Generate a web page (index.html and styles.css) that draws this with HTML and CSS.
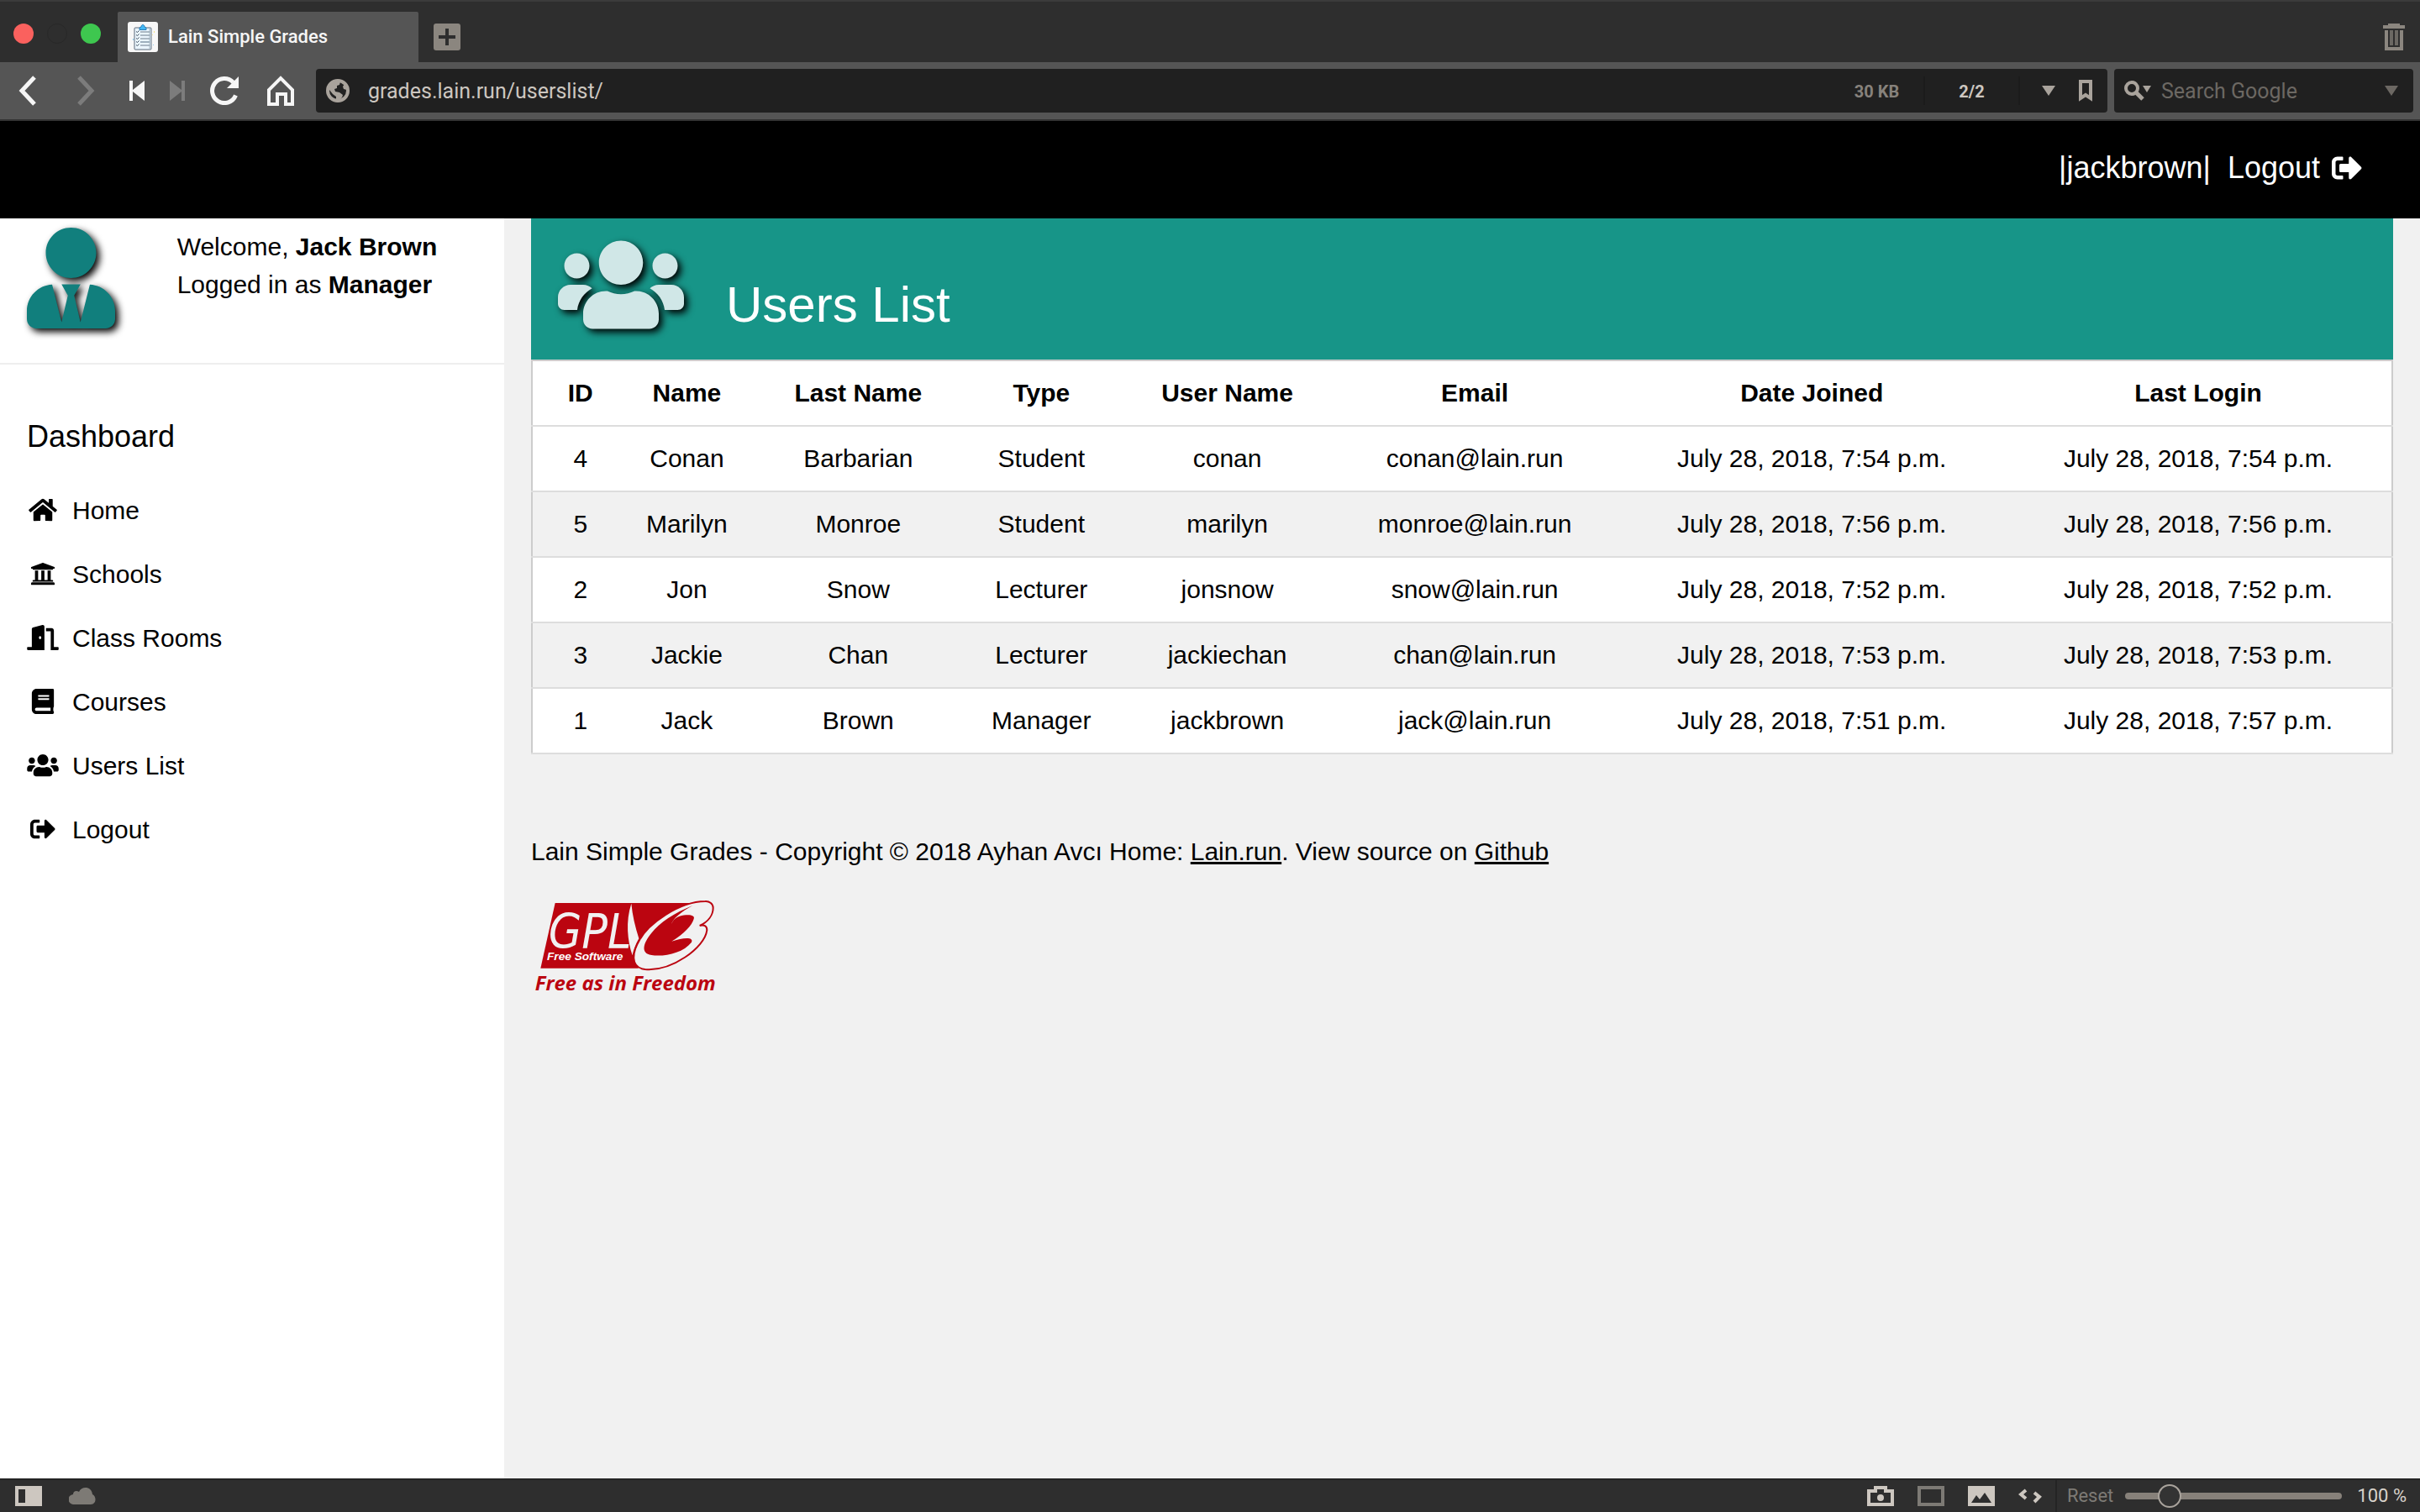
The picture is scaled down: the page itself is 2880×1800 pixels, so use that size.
FILE: index.html
```html
<!DOCTYPE html>
<html lang="en">
<head>
<meta charset="utf-8">
<title>Lain Simple Grades</title>
<link rel="stylesheet" href="styles.css">
</head>
<body>
<svg class="sprite" aria-hidden="true">
  <symbol id="sign-out" viewBox="0 0 512 512"><path d="M497 273L329 441c-15 15-41 4.500-41-17v-96H152c-13.300 0-24-10.700-24-24v-96c0-13.300 10.700-24 24-24h136V88c0-21.400 25.900-32 41-17l168 168c9.300 9.400 9.300 24.600 0 34zM192 436v-40c0-6.600-5.400-12-12-12H96c-17.700 0-32-14.300-32-32V160c0-17.700 14.300-32 32-32h84c6.600 0 12-5.400 12-12V76c0-6.600-5.400-12-12-12H96c-53 0-96 43-96 96v192c0 53 43 96 96 96h84c6.600 0 12-5.400 12-12z"/></symbol>
  <symbol id="users" viewBox="0 0 640 512"><path d="M96 224c35.300 0 64-28.700 64-64s-28.700-64-64-64-64 28.700-64 64 28.700 64 64 64zm448 0c35.300 0 64-28.700 64-64s-28.700-64-64-64-64 28.700-64 64 28.700 64 64 64zm32 32h-64c-17.600 0-33.500 7.100-45.100 18.600 40.300 22.100 68.900 62 75.100 109.400h66c17.700 0 32-14.300 32-32v-32c0-35.300-28.700-64-64-64zm-256 0c61.900 0 112-50.100 112-112S381.900 32 320 32 208 82.100 208 144s50.100 112 112 112zm76.800 32h-8.300c-20.800 10-43.900 16-68.500 16s-47.600-6-68.500-16h-8.300C179.600 288 128 339.600 128 403.200V432c0 26.500 21.500 48 48 48h288c26.500 0 48-21.500 48-48v-28.800c0-63.600-51.600-115.200-115.200-115.200zm-223.700-13.400C161.500 263.100 145.600 256 128 256H64c-35.300 0-64 28.700-64 64v32c0 17.700 14.300 32 32 32h65.900c6.300-47.400 34.900-87.300 75.200-109.400z"/></symbol>
</svg>

<header class="browser">
  <div class="tabs">
    <div class="lights">
      <button class="light red" aria-label="Close"></button>
      <button class="light off" aria-label="Minimize"></button>
      <button class="light green" aria-label="Zoom"></button>
    </div>
    <button class="tab">
      <svg class="favicon" viewBox="0 0 36 36"><rect width="36" height="36" rx="3" fill="#f8f8f8"/><rect x="8" y="7" width="20" height="26" rx="1" fill="#eaf5fd" stroke="#5d6b7a"/><path d="M26.500 8v24" stroke="#b4c4d0" stroke-width="2"/><path d="M15 12h11M15 16h11M15 20h11M15 28h11" stroke="#6d7c8a"/><path d="M15 24h11" stroke="#9eb0bd" stroke-width="2"/><path d="M10 11.500l1.500 1 2-2M10 15.500l1.500 1 2-2M10 19.500l1.500 1 2-2M10 23.500l1.500 1 2-2M10 27.500l1.500 1 2-2" fill="none" stroke="#3d4b5a"/><path d="M14 9.500V7l2-1c0-3.500 4-3.500 4 0l2 1v2.500z" fill="#42b8f5" stroke="#2e80b8"/><path d="M31 11h1v2h-1zM29 15h1v1h-1z" fill="#f4e48c"/><path d="M6 20h1v2H6zM30 27h1v1h-1z" fill="#8ccdf2"/></svg>
      Lain Simple Grades
    </button>
    <button class="new-tab" aria-label="New tab"><svg width="32" height="32" viewBox="0 0 32 32"><rect width="32" height="32" rx="3" fill="#8b867f"/><path d="M16 6v20M6 16h20" stroke="#2e2e2e" stroke-width="4"/></svg></button>
    <button class="trash" aria-label="Closed tabs"><svg width="26" height="32" viewBox="0 0 26 32"><path d="M0 2h6V0h14v2h6v4H0zM2 8h4v20h14V8h4v24H2z" fill="#8b867f"/><path d="M8 8h4v18H8zM14 8h4v18h-4z" fill="#6b6863"/></svg></button>
  </div>

  <div class="toolbar">
    <button class="tool back" aria-label="Back"><svg width="22" height="36" viewBox="0 0 22 36"><path d="M19 2L4 18l15 16" fill="none" stroke="#f6f6f6" stroke-width="5"/></svg></button>
    <button class="tool forward" aria-label="Forward"><svg width="22" height="36" viewBox="0 0 22 36"><path d="M2 2l15 16L2 34" fill="none" stroke="#7c7c7c" stroke-width="5"/></svg></button>
    <button class="tool rewind" aria-label="Rewind"><svg width="18" height="24" viewBox="0 0 18 24"><path d="M0 0h4v11L18 0v24L4 13v11H0z" fill="#f6f6f6"/></svg></button>
    <button class="tool fast" aria-label="Fast forward"><svg width="18" height="24" viewBox="0 0 18 24"><path d="M18 0h-4v11L0 0v24l14-11v11h4z" fill="#7c7c7c"/></svg></button>
    <button class="tool reload" aria-label="Reload"><svg width="34" height="34" viewBox="0 0 34 34"><path d="M30.500 22.500A14.500 14.500 0 1 1 27.500 7" fill="none" stroke="#f6f6f6" stroke-width="5"/><path d="M34 0v14H20z" fill="#f6f6f6"/></svg></button>
    <button class="tool home" aria-label="Home"><svg width="32" height="36" viewBox="0 0 32 36"><path d="M2 34V17L16 3l14 14v17h-8V22H12v12z" fill="none" stroke="#f6f6f6" stroke-width="4"/></svg></button>
    <div class="field address">
      <svg width="28" height="28" viewBox="0 0 28 28"><circle cx="14" cy="14" r="12" fill="#222" stroke="#a9a39c" stroke-width="4"/><path d="M3 10C6 4 11 2 17 3l-1 4-3 1v3l-3 1 1 3 5 1 4 3-1 3-4 4-3-1v-4l-4-3-4-5z" fill="#a9a39c"/><path d="M18 3l4 3-2 3 1 3 4 1V8z" fill="#a9a39c"/></svg>
      <input class="url" type="text" aria-label="Address" value="grades.lain.run/userslist/">
      <span class="stat size">30 KB</span>
      <span class="stat count">2/2</span>
      <button class="drop" aria-label="History"><svg width="16" height="12" viewBox="0 0 16 12"><path d="M0 0h16L8 12z" fill="#a9a39c"/></svg></button>
      <button class="mark" aria-label="Bookmark"><svg width="16" height="26" viewBox="0 0 16 26"><path d="M2 2h12v20l-6-4-6 4z" fill="none" stroke="#a9a39c" stroke-width="4"/></svg></button>
    </div>
    <div class="field search">
      <svg width="32" height="24" viewBox="0 0 32 24"><circle cx="9" cy="9" r="7" fill="none" stroke="#a9a39c" stroke-width="4"/><path d="M14 14l8 8" stroke="#a9a39c" stroke-width="5"/><path d="M22 6h10l-5 8z" fill="#a9a39c"/></svg>
      <input class="query" type="text" aria-label="Search" placeholder="Search Google">
      <button class="engine" aria-label="Search engine"><svg width="16" height="12" viewBox="0 0 16 12"><path d="M0 0h16L8 12z" fill="#6c6863"/></svg></button>
    </div>
  </div>
</header>

<div class="topbar">
  <a href="#">|jackbrown|</a>
  <a class="logout" href="#">Logout <svg width="36" height="36"><use href="#sign-out"/></svg></a>
</div>

<div class="page">
  <nav class="sidebar">
    <div class="profile">
      <svg class="avatar" width="105" height="120" viewBox="0 0 448 512"><path d="M224 256c70.700 0 128-57.300 128-128S294.700 0 224 0 96 57.300 96 128s57.300 128 128 128zm95.800 32.600L272 480l-32-136 32-56h-96l32 56-32 136-47.800-191.400C56.900 292 0 350.300 0 422.400V464c0 26.500 21.500 48 48 48h352c26.500 0 48-21.500 48-48v-41.600c0-72.100-56.900-130.400-128.200-133.800z"/></svg>
      <div>Welcome, <strong>Jack Brown</strong><br>Logged in as <strong>Manager</strong></div>
    </div>
    <h2>Dashboard</h2>
    <ul class="menu">
      <li><a href="#"><svg viewBox="0 0 576 512"><path d="M280.370 148.260L96 300.110V464a16 16 0 0 0 16 16l112.060-.290a16 16 0 0 0 15.920-16V368a16 16 0 0 1 16-16h64a16 16 0 0 1 16 16v95.640a16 16 0 0 0 16 16.050L464 480a16 16 0 0 0 16-16V300L295.670 148.260a12.190 12.190 0 0 0-15.300 0zM571.600 251.470L488 182.560V44.050a12 12 0 0 0-12-12h-56a12 12 0 0 0-12 12v72.610L318.470 43a48 48 0 0 0-61 0L4.340 251.470a12 12 0 0 0-1.600 16.900l25.500 31A12 12 0 0 0 45.150 301l235.220-193.740a12.190 12.190 0 0 1 15.300 0L530.900 301a12 12 0 0 0 16.900-1.600l25.500-31a12 12 0 0 0-1.700-16.930z"/></svg>Home</a></li>
      <li><a href="#"><svg viewBox="0 0 512 512"><path d="M496 128v16a8 8 0 0 1-8 8h-24v12c0 6.627-5.373 12-12 12H60c-6.627 0-12-5.373-12-12v-12H24a8 8 0 0 1-8-8v-16a8 8 0 0 1 4.941-7.392l232-88a7.996 7.996 0 0 1 6.118 0l232 88A8 8 0 0 1 496 128zm-24 304H40c-13.255 0-24 10.745-24 24v16a8 8 0 0 0 8 8h464a8 8 0 0 0 8-8v-16c0-13.255-10.745-24-24-24zM96 192v192H60c-6.627 0-12 5.373-12 12v20h416v-20c0-6.627-5.373-12-12-12h-36V192h-64v192h-64V192h-64v192h-64V192H96z"/></svg>Schools</a></li>
      <li><a href="#"><svg viewBox="0 0 640 512"><path d="M624 448h-80V113.450C544 86.190 522.470 64 496 64H384v64h96v384h144c8.840 0 16-7.160 16-16v-32c0-8.840-7.160-16-16-16zM312.240 1.010l-192 49.740C105.990 54.440 96 67.700 96 82.920V448H16c-8.840 0-16 7.160-16 16v32c0 8.840 7.160 16 16 16h336V33.180c0-21.580-19.560-37.410-39.760-32.170zM264 288c-13.250 0-24-14.330-24-32s10.750-32 24-32 24 14.330 24 32-10.750 32-24 32z"/></svg>Class Rooms</a></li>
      <li><a href="#"><svg viewBox="0 0 448 512"><path d="M448 360V24c0-13.300-10.700-24-24-24H96C43 0 0 43 0 96v320c0 53 43 96 96 96h328c13.300 0 24-10.700 24-24v-16c0-7.500-3.500-14.300-8.900-18.700-4.200-15.400-4.200-59.300 0-74.700 5.400-4.300 8.900-11.100 8.900-18.600zM128 134c0-3.300 2.700-6 6-6h212c3.300 0 6 2.700 6 6v20c0 3.300-2.700 6-6 6H134c-3.300 0-6-2.700-6-6v-20zm0 64c0-3.300 2.700-6 6-6h212c3.300 0 6 2.700 6 6v20c0 3.300-2.700 6-6 6H134c-3.300 0-6-2.700-6-6v-20zm253.400 250H96c-17.700 0-32-14.300-32-32 0-17.600 14.400-32 32-32h285.400c-1.900 17.100-1.900 46.900 0 64z"/></svg>Courses</a></li>
      <li><a href="#"><svg><use href="#users"/></svg>Users List</a></li>
      <li><a href="#"><svg><use href="#sign-out"/></svg>Logout</a></li>
    </ul>
  </nav>

  <main>
    <div class="title">
      <svg class="group" width="150" height="120"><use href="#users"/></svg>
      <h1>Users List</h1>
    </div>
    <table>
      <thead>
        <tr><th>ID</th><th>Name</th><th>Last Name</th><th>Type</th><th>User Name</th><th>Email</th><th>Date Joined</th><th>Last Login</th></tr>
      </thead>
      <tbody>
        <tr><td>4</td><td>Conan</td><td>Barbarian</td><td>Student</td><td>conan</td><td>conan@lain.run</td><td>July 28, 2018, 7:54 p.m.</td><td>July 28, 2018, 7:54 p.m.</td></tr>
        <tr><td>5</td><td>Marilyn</td><td>Monroe</td><td>Student</td><td>marilyn</td><td>monroe@lain.run</td><td>July 28, 2018, 7:56 p.m.</td><td>July 28, 2018, 7:56 p.m.</td></tr>
        <tr><td>2</td><td>Jon</td><td>Snow</td><td>Lecturer</td><td>jonsnow</td><td>snow@lain.run</td><td>July 28, 2018, 7:52 p.m.</td><td>July 28, 2018, 7:52 p.m.</td></tr>
        <tr><td>3</td><td>Jackie</td><td>Chan</td><td>Lecturer</td><td>jackiechan</td><td>chan@lain.run</td><td>July 28, 2018, 7:53 p.m.</td><td>July 28, 2018, 7:53 p.m.</td></tr>
        <tr><td>1</td><td>Jack</td><td>Brown</td><td>Manager</td><td>jackbrown</td><td>jack@lain.run</td><td>July 28, 2018, 7:51 p.m.</td><td>July 28, 2018, 7:57 p.m.</td></tr>
      </tbody>
    </table>
    <footer>
      <p>Lain Simple Grades - Copyright © 2018 Ayhan Avcı Home: <a href="#">Lain.run</a>. View source on <a href="#">Github</a></p>
      <svg class="license" width="234" height="130" viewBox="18 0 702 390" role="img" aria-label="GPL v3">
        <path d="M104 45H625L400 278H52z" fill="#bb0510"/>
        <path d="M376 47C355 110 362 180 380 232C383 215 390 195 403 172C390 130 380 90 376 47z" fill="#f1f1f1"/>
        <path d="M640 39C655 38 668 48 668 62C668 88 650 112 620 126C638 122 646 128 646 142C638 205 520 290 425 282C370 275 380 220 405 178C435 120 545 40 640 39z" fill="#f1f1f1" stroke="#bb0510" stroke-width="6"/>
        <path d="M518 124C524 106 534 97 548 92C580 84 605 88 599 102C592 126 565 154 520 182C560 168 600 165 591 185C560 225 490 238 448 231C408 225 418 188 448 152C476 116 530 80 595 54C555 76 524 100 518 124z" fill="#bb0510"/>
        <text class="gpl" x="80" y="207">GPL</text>
        <text class="free-software" x="75" y="249">Free Software</text>
        <text class="freedom" x="32" y="356">Free as in Freedom</text>
      </svg>
    </footer>
  </main>
</div>

<div class="statusbar">
  <button aria-label="Panel"><svg width="32" height="24" viewBox="0 0 32 24"><path d="M0 0h32v24H0zM4 4v16h8V4z" fill="#cdc7c0" fill-rule="evenodd"/></svg></button>
  <button aria-label="Sync"><svg width="32" height="20" viewBox="0 0 32 20"><path d="M6 20a6 6 0 0 1-1-12C5 4 9 3 12 5c3-7 15-7 16 3 5 2 5 12-2 12z" fill="#7d7a75"/></svg></button>
  <div class="view">
    <button aria-label="Capture"><svg width="32" height="24" viewBox="0 0 32 24"><path d="M8 0h16v4h8v20H0V4h8zM12 4v4H4v12h24V8h-8V4z" fill="#cdc7c0" fill-rule="evenodd"/><circle cx="16" cy="14" r="4" fill="#cdc7c0"/></svg></button>
    <button aria-label="Tiling"><svg width="32" height="24" viewBox="0 0 32 24"><path d="M2 2h28v20H2z" fill="none" stroke="#7d7a75" stroke-width="4"/></svg></button>
    <button aria-label="Images"><svg width="32" height="24" viewBox="0 0 32 24"><path d="M0 0h32v24H0zM4 20h24L20 8l-6 8-4-5z" fill="#cdc7c0" fill-rule="evenodd"/></svg></button>
    <button aria-label="Page actions"><svg width="28" height="18" viewBox="0 0 28 18"><path d="M9 2L3 7l6 5M19 5l6 5-6 6" fill="none" stroke="#cdc7c0" stroke-width="4"/></svg></button>
  </div>
  <div class="zoom">
    <button class="reset">Reset</button>
    <input type="range" min="40" max="400" value="100" aria-label="Page zoom">
    <span>100 %</span>
  </div>
</div>
</body>
</html>
```

FILE: styles.css
```css
* { box-sizing: border-box; }

body {
  margin: 0;
  min-height: 100vh;
  display: flex;
  flex-direction: column;
  background: #f1f1f1;
  color: #000;
  font: 30px/44px "Liberation Sans", Arial, sans-serif;
}

button {
  margin: 0;
  padding: 0;
  border: 0;
  background: none;
  color: inherit;
  font: inherit;
}

input { font: inherit; }
svg { display: block; flex: none; }
a { color: inherit; }
.sprite { position: absolute; width: 0; height: 0; }

/* Browser window */
.browser, .statusbar {
  background: #2e2e2e;
  font: 25px/32px Roboto, Inter, sans-serif;
}

.browser { border-top: 2px solid #3b3b3b; border-bottom: 2px solid #333; }

.tabs {
  display: flex;
  align-items: center;
  height: 72px;
  padding-top: 12px;
}

.lights {
  display: flex;
  gap: 16px;
  width: 140px;
  padding: 0 0 8px 16px;
}

.light { width: 24px; height: 24px; border-radius: 50%; }
.red { background: #fa615e; }
.off { border: 1px solid #282828; }
.green { background: #3ec74f; }

.tab {
  display: flex;
  align-items: center;
  gap: 12px;
  width: 358px;
  height: 60px;
  padding-left: 12px;
  border-radius: 2px 2px 0 0;
  background: #555;
  color: #f6f6f6;
  font-size: 22px;
  font-weight: 500;
}

.favicon { width: 36px; height: 36px; }
.new-tab { margin-left: 18px; }
.trash { margin: 0 18px 0 auto; }

.toolbar {
  display: flex;
  align-items: center;
  height: 68px;
  padding-right: 8px;
  background: #555;
}

.tool { display: flex; justify-content: center; }
.back { width: 66px; }
.forward { width: 74px; }
.rewind { width: 46px; }
.fast { width: 50px; }
.reload { width: 62px; }
.home { width: 72px; margin-right: 6px; }

.field {
  display: flex;
  align-items: center;
  height: 52px;
  padding: 0 12px;
  border-radius: 4px;
  background: #202020;
}

.field input {
  flex: 1;
  min-width: 0;
  padding: 2px 0 0;
  border: 0;
  outline: 0;
  background: none;
}

.address { flex: 1; }
.search { width: 356px; margin-left: 8px; }
.url { margin-left: 22px; color: #cdc7c0; }
.query { margin-left: 12px; }
.query::placeholder { color: #6c6863; opacity: 1; }
.engine { margin-right: 6px; }

.stat {
  width: 113px;
  padding-top: 2px;
  border-right: 2px solid #1b1b1b;
  font-size: 20px;
  font-weight: 700;
  text-align: center;
}

.size { color: #87827c; }
.count { color: #cdc7c0; }
.drop { margin: 0 28px 0 26px; }
.mark { margin-right: 6px; }

/* Site header */
.topbar {
  display: flex;
  align-items: center;
  justify-content: flex-end;
  gap: 20px;
  height: 116px;
  padding: 0 69px 4px 0;
  background: #000;
  color: #fff;
  font-size: 36px;
  line-height: 54px;
}

.topbar a { text-decoration: none; }
.topbar svg, .menu svg { fill: currentColor; }
.logout { display: flex; align-items: center; gap: 14px; }

.page { display: flex; flex: 1; }

/* Sidebar */
.sidebar { flex: none; width: 600px; background: #fff; }

.profile {
  display: grid;
  grid-template-columns: 1fr 2fr;
  padding: 11px 32px 41px;
  border-bottom: 2px solid #eee;
  line-height: 45px;
}

.avatar { fill: #117f7d; filter: drop-shadow(4px 4px 4px #000); }

.sidebar h2 {
  margin: 0;
  padding: 59px 32px 23px;
  font-size: 36px;
  font-weight: 400;
  line-height: 54px;
}

.menu { margin: 0; padding: 0; list-style: none; }

.menu a {
  display: flex;
  align-items: center;
  gap: 16px;
  padding: 16px 32px;
  text-decoration: none;
}

.menu svg { width: 38px; height: 30px; margin-bottom: 2px; }

/* Users list */
main { flex: 1; padding: 0 32px; }

.title {
  display: flex;
  align-items: flex-end;
  gap: 50px;
  padding: 19px 32px 29px;
  background: #179588;
  color: #fff;
}

.group { fill: #d0e7e7; filter: drop-shadow(4px 4px 4px #000); }
.title h1 { margin: 0; font-size: 60px; font-weight: 400; line-height: 72px; }

table {
  width: 100%;
  border: 2px solid #ccc;
  border-collapse: collapse;
  background: #fff;
  text-align: center;
}

tr { border-bottom: 2px solid #ddd; }
tbody tr:nth-child(even) { background: #f1f1f1; }
th, td { padding: 16px; }
th:first-child, td:first-child { padding-left: 30px; }

footer { padding-top: 94px; }
footer p { margin: 0 0 24px; }

.license text { font-style: italic; font-weight: 700; }
.gpl { fill: #f1f1f1; font-family: "Liberation Sans Narrow", "DejaVu Sans Condensed", sans-serif; font-size: 170px; }
.free-software { fill: #fff; font-family: "Liberation Sans", sans-serif; font-size: 41px; }
.freedom { fill: #bb0510; font-family: "Open Sans", sans-serif; font-size: 72px; }
.license .gpl { font-weight: 400; }

/* Status bar */
.statusbar {
  display: flex;
  align-items: center;
  gap: 32px;
  height: 40px;
  padding-left: 18px;
  border-top: 2px solid #242424;
  color: #d8d2cb;
  font-size: 22px;
}

.view { display: flex; align-items: center; gap: 28px; margin-left: auto; }

.zoom {
  display: flex;
  align-items: center;
  gap: 14px;
  height: 38px;
  margin-left: -16px;
  padding: 0 16px 0 12px;
  border-left: 2px solid #242424;
}

.reset { color: #7d7a75; }
.zoom span { margin-left: 4px; }

input[type="range"] {
  width: 258px;
  height: 28px;
  margin: 0;
  appearance: none;
  background: none;
}

input[type="range"]::-webkit-slider-runnable-track {
  height: 8px;
  border-radius: 4px;
  background: #87817a;
}

input[type="range"]::-webkit-slider-thumb {
  width: 28px;
  height: 28px;
  margin-top: -10px;
  appearance: none;
  border: 2px solid #a9a39c;
  border-radius: 50%;
  background: #333;
}
```
